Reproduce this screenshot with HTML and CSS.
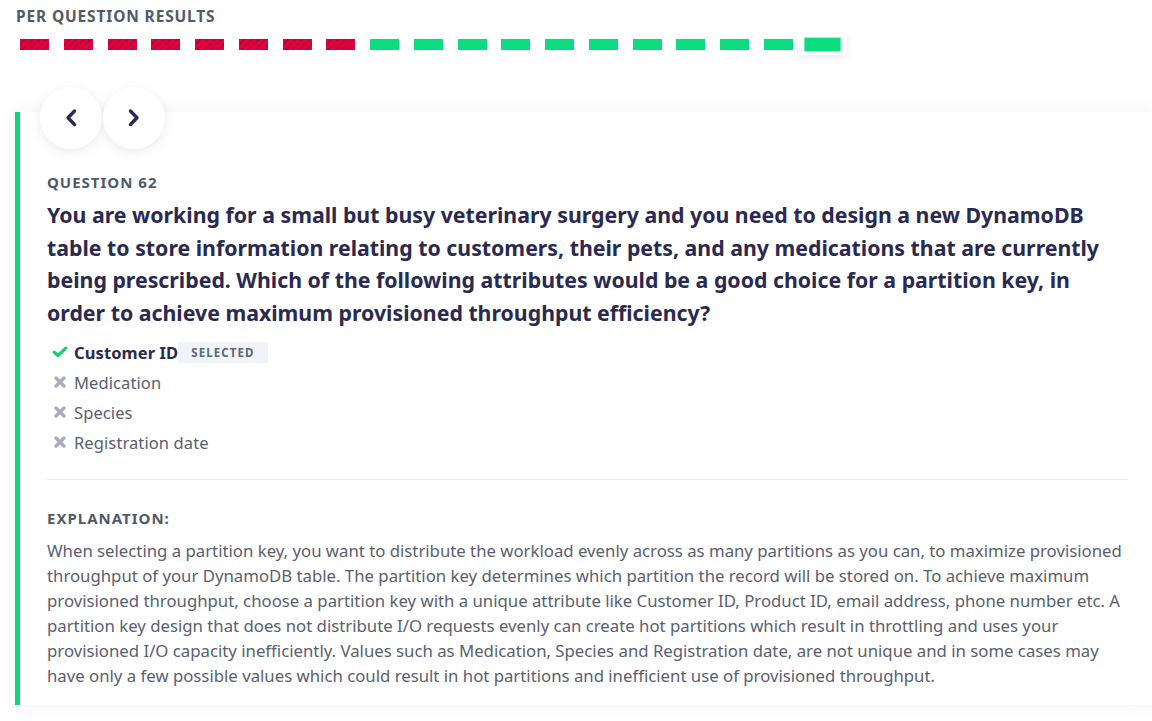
FILE: index.html
```html
<!DOCTYPE html>
<html>
<head>
<meta charset="utf-8">
<link rel="stylesheet" href="styles.css">
</head>
<body>
<section class="results">
  <h2 class="results-title">PER QUESTION RESULTS</h2>
  <div class="bars">
    <span class="bar wrong"></span><span class="bar wrong"></span><span class="bar wrong"></span><span class="bar wrong"></span>
    <span class="bar wrong"></span><span class="bar wrong"></span><span class="bar wrong"></span><span class="bar wrong"></span>
    <span class="bar right"></span><span class="bar right"></span><span class="bar right"></span><span class="bar right"></span>
    <span class="bar right"></span><span class="bar right"></span><span class="bar right"></span><span class="bar right"></span>
    <span class="bar right"></span><span class="bar right"></span>
    <span class="bar-current"><span class="bar right"></span></span>
  </div>
</section>

<article class="card">
  <div class="nav">
    <button class="nav-btn" aria-label="Previous">
      <svg width="14" height="20" viewBox="0 0 14 20"><path d="M10.5 3 L4 9.75 L10.5 16.5" fill="none" stroke="#2c2a55" stroke-width="3.4" stroke-linecap="round" stroke-linejoin="round"/></svg>
    </button>
    <button class="nav-btn" aria-label="Next">
      <svg width="14" height="20" viewBox="0 0 14 20"><path d="M3.5 3 L10 9.75 L3.5 16.5" fill="none" stroke="#2c2a55" stroke-width="3.4" stroke-linecap="round" stroke-linejoin="round"/></svg>
    </button>
  </div>
  <div class="question-label">QUESTION 62</div>
  <h1 class="question">You are working for a small but busy veterinary surgery and you need to design a new DynamoDB table to store information relating to customers, their pets, and any medications that are currently being prescribed. Which of the following attributes would be a good choice for a partition key, in order to achieve maximum provisioned throughput efficiency?</h1>
  <ul class="options">
    <li class="option correct">
      <svg class="icon" width="16" height="16" viewBox="0 0 16 16"><path d="M2.2 8.3 L6 11.6 L13.8 4.2" fill="none" stroke="#1ecb6b" stroke-width="3.2" stroke-linecap="round" stroke-linejoin="round"/></svg>
      <span class="option-text">Customer ID</span><span class="badge">SELECTED</span>
    </li>
    <li class="option">
      <svg class="icon" width="16" height="16" viewBox="0 0 16 16"><path d="M4 4 L12 12 M12 4 L4 12" fill="none" stroke="#a7aeb9" stroke-width="3.4" stroke-linecap="round"/></svg>
      <span class="option-text">Medication</span>
    </li>
    <li class="option">
      <svg class="icon" width="16" height="16" viewBox="0 0 16 16"><path d="M4 4 L12 12 M12 4 L4 12" fill="none" stroke="#a7aeb9" stroke-width="3.4" stroke-linecap="round"/></svg>
      <span class="option-text">Species</span>
    </li>
    <li class="option">
      <svg class="icon" width="16" height="16" viewBox="0 0 16 16"><path d="M4 4 L12 12 M12 4 L4 12" fill="none" stroke="#a7aeb9" stroke-width="3.4" stroke-linecap="round"/></svg>
      <span class="option-text">Registration date</span>
    </li>
  </ul>
  <hr class="divider">
  <div class="explanation-label">EXPLANATION:</div>
  <p class="explanation">When selecting a partition key, you want to distribute the workload evenly across as many partitions as you can, to maximize provisioned throughput of your DynamoDB table. The partition key determines which partition the record will be stored on. To achieve maximum provisioned throughput, choose a partition key with a unique attribute like Customer ID, Product ID, email address, phone number etc. A partition key design that does not distribute I/O requests evenly can create hot partitions which result in throttling and uses your provisioned I/O capacity inefficiently. Values such as Medication, Species and Registration date, are not unique and in some cases may have only a few possible values which could result in hot partitions and inefficient use of provisioned throughput.</p>
</article>
</body>
</html>
```
FILE: styles.css
```css
* { box-sizing: border-box; }
html, body { margin: 0; padding: 0; background: #ffffff; }
body {
  font-family: "Noto Sans", "Open Sans", sans-serif;
  color: #545b6b;
  width: 1152px;
  height: 721px;
  overflow: hidden;
}
.results { padding: 6px 0 0 16px; }
.results-title {
  margin: 0;
  font-size: 15.5px;
  font-weight: 700;
  letter-spacing: 0.85px;
  color: #505a6b;
  line-height: 20px;
}
.bars {
  display: flex;
  align-items: center;
  gap: 14.75px;
  margin-top: 13px;
  padding-left: 4px;
  height: 11px;
}
.bar { display: block; width: 29px; height: 11px; flex: none; }
.bar.wrong {
  background: repeating-linear-gradient(135deg, #e2003d 0 3px, #c1003a 3px 5px);
}
.bar.right { background: #0bdc80; }
.bar-current {
  flex: none;
  display: block;
  transform: scale(1.25);
  padding: 3px 5px;
  margin: -3px -5px;
  background: #fff;
  box-shadow: 0 2px 6px rgba(0, 0, 0, 0.08);
}
.card {
  position: relative;
  margin: 62px 0 0 15px;
  border-left: 5px solid #12d47c;
  background: #fff;
  box-shadow: 0 0 18px rgba(0, 0, 0, 0.06);
  padding: 59px 24px 17px 27px;
}
.nav {
  position: absolute;
  top: -25px;
  left: 20px;
  display: flex;
  gap: 1px;
}
.nav-btn {
  width: 62px;
  height: 62px;
  border-radius: 50%;
  border: none;
  background: #fff;
  box-shadow: 0 3px 12px rgba(0, 0, 0, 0.08);
  display: flex;
  align-items: center;
  justify-content: center;
  padding: 0;
}
.question-label, .explanation-label {
  font-size: 15px;
  font-weight: 700;
  letter-spacing: 1px;
  color: #505a6b;
  line-height: 22px;
}
.question {
  margin: 6px 0 0;
  font-size: 21.3px;
  line-height: 32.5px;
  font-weight: 700;
  color: #2a2951;
}
.options { list-style: none; margin: 8px 0 0; padding: 0; }
.option {
  display: flex;
  align-items: center;
  height: 30px;
  font-size: 16.5px;
  letter-spacing: 0.1px;
  color: #596071;
}
.icon { margin: 0 6px 0 5px; flex: none; }
.option.correct .option-text { font-weight: 700; color: #2a2951; }
.badge {
  margin-left: 0;
  background: #f0f3f7;
  border-radius: 2px;
  font-size: 11.5px;
  font-weight: 700;
  letter-spacing: 1.1px;
  color: #5c6678;
  padding: 3px 13px;
  line-height: 15px;
}
.divider {
  border: none;
  border-top: 1px solid #e9ebee;
  margin: 22px 0 0;
}
.explanation-label { margin-top: 27px; }
.explanation {
  margin: 9px 0 0;
  font-size: 16.75px;
  line-height: 25px;
  color: #5a6070;
}
```
